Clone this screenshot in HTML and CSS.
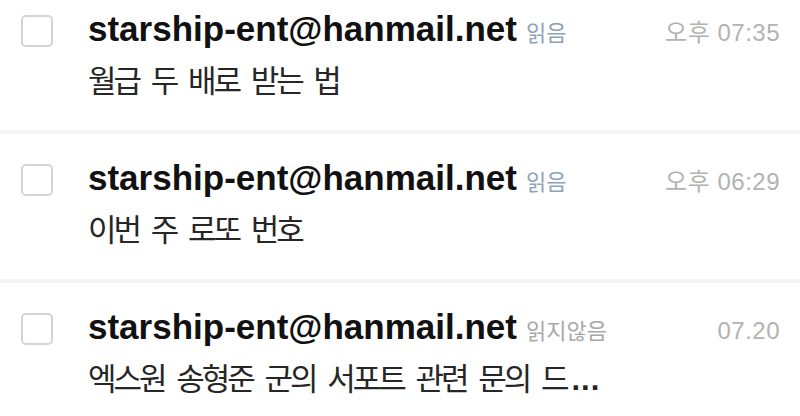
FILE: index.html
```html
<!DOCTYPE html>
<html lang="ko">
<head>
  <meta charset="UTF-8" />
  <meta name="viewport" content="width=device-width, initial-scale=1.0"/>
  <title>받은메일함</title>
  <link rel="stylesheet" href="styles.css">
</head>
<body>
  <ul class="mail-list">
    <li class="mail">
      <span class="check"></span>
      <div class="mail-body">
        <div class="mail-top">
          <span class="sender">starship-ent@hanmail.net</span>
          <span class="state read">읽음</span>
          <span class="time">오후 07:35</span>
        </div>
        <div class="subject">월급 두 배로 받는 법</div>
      </div>
    </li>
    <li class="mail">
      <span class="check"></span>
      <div class="mail-body">
        <div class="mail-top">
          <span class="sender">starship-ent@hanmail.net</span>
          <span class="state read">읽음</span>
          <span class="time">오후 06:29</span>
        </div>
        <div class="subject">이번 주 로또 번호</div>
      </div>
    </li>
    <li class="mail">
      <span class="check"></span>
      <div class="mail-body">
        <div class="mail-top">
          <span class="sender">starship-ent@hanmail.net</span>
          <span class="state">읽지않음</span>
          <span class="time">07.20</span>
        </div>
        <div class="subject">엑스원 송형준 군의 서포트 관련 문의 드<span class="more">...</span></div>
      </div>
    </li>
  </ul>
</body>
</html>
```

FILE: styles.css
```css
body {
  margin: 0;
  background: #fff;
  font-family: "Liberation Sans", "Noto Sans CJK KR", sans-serif;
  color: #111;
  overflow: hidden;
}
.mail-list {
  list-style: none;
  margin: -15px 0 0;
  padding: 0;
}
.mail {
  display: flex;
  align-items: flex-start;
  padding: 24px 20px 31px 21px;
  border-bottom: 4px solid #f4f4f4;
}
.check {
  flex: none;
  width: 28px;
  height: 28px;
  margin-top: 6px;
  margin-right: 35px;
  border: 2px solid #d4d4d4;
  border-radius: 5px;
}
.mail-body {
  flex: 1;
}
.mail-top {
  display: flex;
  align-items: baseline;
  line-height: 40px;
}
.sender {
  font-size: 35px;
  font-weight: bold;
  color: #111;
}
.state {
  margin-left: 9px;
  font-family: "Noto Sans CJK KR", sans-serif;
  font-size: 22px;
  color: #a8a8a8;
}
.state.read {
  color: #8ea3ba;
}
.time {
  margin-left: auto;
  font-size: 24px;
  color: #b2b2b2;
  letter-spacing: 0.5px;
}
.subject {
  margin-top: 6px;
  font-family: "Noto Sans CJK KR", sans-serif;
  font-size: 31px;
  line-height: 40px;
  letter-spacing: -3px;
  word-spacing: 6px;
  color: #262626;
}
.subject .more {
  font-family: "Liberation Sans", sans-serif;
  font-weight: bold;
  letter-spacing: 1px;
  margin-left: 5px;
}
```
